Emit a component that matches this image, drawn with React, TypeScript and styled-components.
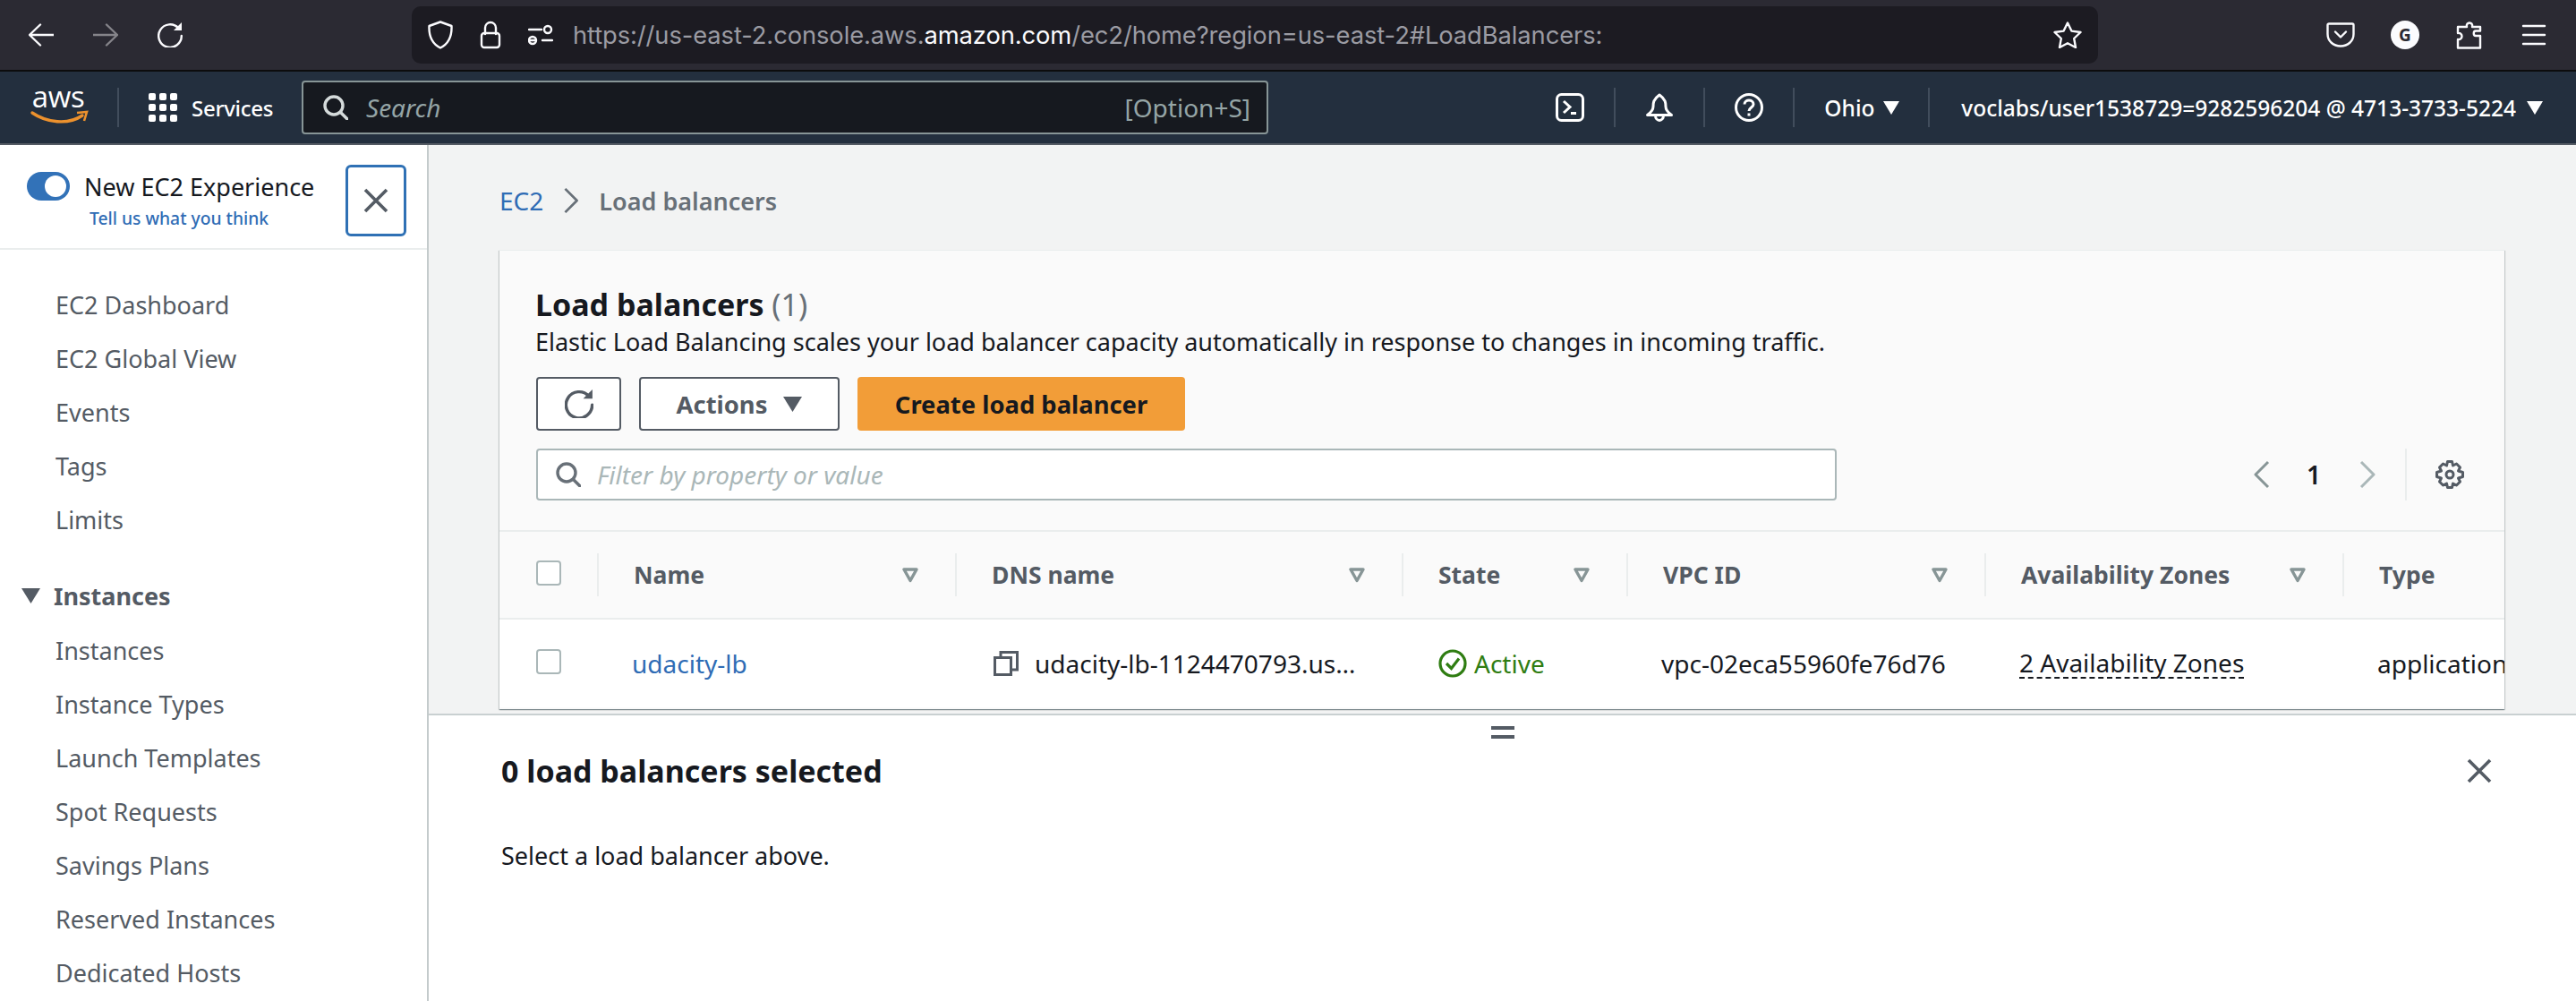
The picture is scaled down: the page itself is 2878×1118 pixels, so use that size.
import React from "react";
import styled, { createGlobalStyle } from "styled-components";

const GlobalStyle = createGlobalStyle`
  html, body {
    margin: 0;
    width: 2878px;
    height: 1118px;
    overflow: hidden;
    background: #fff;
  }
  body {
    font-family: "Noto Sans", "Open Sans", sans-serif;
    font-size: 27px;
    color: #16191f;
  }
`;

const Page = styled.div`
  width: 2878px;
  height: 1118px;
  display: flex;
  flex-direction: column;
`;

/* browser chrome */
const BrowserBar = styled.div`
  flex: none;
  height: 78px;
  box-sizing: content-box;
  background: #2b2a33;
  border-bottom: 2px solid #0c0c0d;
  display: flex;
  align-items: center;
  padding: 0 31px 0 32px;
`;

const NavArrows = styled.div`
  display: flex;
  gap: 44px;
  align-items: center;
`;

const UrlBar = styled.div`
  margin-left: 256px;
  width: 1884px;
  height: 64px;
  box-sizing: border-box;
  background: #1c1b22;
  border-radius: 10px;
  padding: 0 18px;
  display: flex;
  align-items: center;
  gap: 30px;
`;

const UrlText = styled.div`
  margin-left: -8px;
  font-family: "Inter", sans-serif;
  font-size: 27.35px;
  letter-spacing: -0.1px;
  color: #9b9ba3;
  white-space: nowrap;
  b {
    font-weight: 400;
    color: #fbfbfe;
  }
`;

const StarSlot = styled.div`
  margin-left: auto;
  display: flex;
`;

const ToolbarIcons = styled.div`
  margin-left: auto;
  display: flex;
  gap: 40px;
  align-items: center;
`;

const Avatar = styled.div`
  width: 32px;
  height: 32px;
  border-radius: 50%;
  background: #fbfbfe;
  color: #2b2a33;
  font-size: 19px;
  font-weight: 700;
  display: flex;
  align-items: center;
  justify-content: center;
`;

/* aws console nav */
const NavBar = styled.div`
  flex: none;
  height: 80px;
  background: #232f3e;
  border-bottom: 2px solid #545b64;
  display: flex;
  align-items: center;
  padding: 0 37px 0 34px;
  color: #fff;
`;

const NavRule = styled.div`
  width: 2px;
  height: 44px;
  background: #414d5c;
  margin: 0 33px;
`;

const ServicesLabel = styled.div`
  width: 89px;
  margin: 0 34px 0 16px;
  font-size: 24px;
  letter-spacing: -0.3px;
  font-weight: 500;
  white-space: nowrap;
`;

const SearchBox = styled.div`
  width: 1080px;
  height: 60px;
  box-sizing: border-box;
  background: #16191f;
  border: 2px solid #879596;
  border-radius: 4px;
  display: flex;
  align-items: center;
  padding: 0 18px 0 22px;
  color: #95a5a6;
  font-size: 28px;
`;

const SearchHint = styled.span`
  margin-left: 20px;
  font-style: italic;
`;

const ShortcutHint = styled.span`
  margin-left: auto;
`;

const NavRight = styled.div`
  margin-left: auto;
  display: flex;
  align-items: center;
  height: 44px;
`;

const NavCell = styled.div`
  width: 100px;
  height: 44px;
  box-sizing: border-box;
  border-right: 2px solid #414d5c;
  display: flex;
  align-items: center;
  justify-content: center;
`;

const RegionCell = styled.div`
  width: 151px;
  height: 44px;
  box-sizing: border-box;
  border-right: 2px solid #414d5c;
  display: flex;
  align-items: center;
  padding-left: 33px;
  gap: 10px;
  font-size: 24.5px;
  font-weight: 500;
`;

const AccountCell = styled.div`
  display: flex;
  align-items: center;
  padding-left: 35px;
  gap: 12px;
  font-size: 24.5px;
  font-weight: 500;
  white-space: nowrap;
`;

/* sidebar */
const Body = styled.div`
  flex: 1;
  min-height: 0;
  display: flex;
`;

const Sidebar = styled.div`
  flex: none;
  width: 479px;
  box-sizing: border-box;
  border-right: 2px solid #c4cbcc;
  background: #fff;
  overflow: hidden;
`;

const ExperienceRow = styled.div`
  height: 117px;
  box-sizing: border-box;
  border-bottom: 2px solid #eaeded;
  display: flex;
  padding: 22px 23px 0 30px;
  justify-content: space-between;
`;

const ExperienceText = styled.div`
  display: flex;
  flex-direction: column;
  padding-top: 6px;
`;

const ToggleLine = styled.div`
  display: flex;
  align-items: center;
  gap: 16px;
  height: 36px;
  white-space: nowrap;
`;

const Toggle = styled.div`
  width: 48px;
  height: 32px;
  border-radius: 16px;
  background: #3272b8;
  display: flex;
  align-items: center;
  justify-content: flex-end;
  padding-right: 4px;
  box-sizing: border-box;
  &::after {
    content: "";
    width: 24px;
    height: 24px;
    border-radius: 50%;
    background: #fff;
  }
`;

const FeedbackLink = styled.div`
  margin: 3px 0 0 70px;
  font-size: 19.3px;
  line-height: 30px;
  font-weight: 500;
  color: #2f6cb5;
  white-space: nowrap;
`;

const CloseBox = styled.div`
  width: 68px;
  height: 80px;
  box-sizing: border-box;
  border: 3px solid #2f71b5;
  border-radius: 6px;
  display: flex;
  align-items: center;
  justify-content: center;
`;

const SideList = styled.div`
  padding-top: 32px;
`;

const SideItem = styled.div`
  height: 60px;
  line-height: 60px;
  padding-left: 62px;
  color: #545b64;
  white-space: nowrap;
`;

const SideGroup = styled.div`
  height: 60px;
  margin: 24px 0 2px;
  padding-left: 24px;
  display: flex;
  align-items: center;
  gap: 15px;
  font-weight: 700;
  color: #545b64;
`;

/* main */
const Main = styled.div`
  flex: 1;
  min-width: 0;
  display: flex;
  flex-direction: column;
  background: #f2f3f3;
`;

const Content = styled.div`
  flex: none;
  padding: 42px 80px 5px 79px;
`;

const Crumbs = styled.div`
  height: 40px;
  margin-bottom: 35px;
  display: flex;
  align-items: center;
  gap: 22px;
`;

const CrumbLink = styled.span`
  color: #2f6cb5;
  font-size: 28px;
`;

const CrumbCurrent = styled.span`
  color: #687078;
  font-weight: 600;
`;

const Card = styled.div`
  height: 513px;
  box-sizing: border-box;
  background: #fafafa;
  box-shadow: 0 1px 1px 0 rgba(0, 28, 36, 0.3), 1px 1px 1px 0 rgba(0, 28, 36, 0.15),
    -1px 1px 1px 0 rgba(0, 28, 36, 0.15);
  border-top: 1px solid #eaeded;
  overflow: hidden;
`;

const CardHead = styled.div`
  height: 312px;
  box-sizing: border-box;
  padding: 40px 0 0 41px;
`;

const CardTitle = styled.div`
  margin-left: -1px;
  font-size: 34px;
  line-height: 40px;
  font-weight: 700;
  span {
    font-weight: 400;
    color: #687078;
  }
`;

const CardDesc = styled.div`
  margin: 2px 0 0 -1px;
  line-height: 40px;
`;

const ButtonRow = styled.div`
  display: flex;
  gap: 20px;
  margin-top: 19px;
  font-size: 27.4px;
`;

const OutlineButton = styled.div<{ $w: number }>`
  width: ${({ $w }) => $w}px;
  height: 60px;
  box-sizing: border-box;
  border: 2px solid #545b64;
  border-radius: 4px;
  background: #fff;
  color: #545b64;
  font-weight: 700;
  display: flex;
  align-items: center;
  justify-content: center;
  gap: 18px;
`;

const PrimaryButton = styled.div`
  width: 366px;
  height: 60px;
  border-radius: 4px;
  background: #f29d38;
  color: #16191f;
  font-weight: 700;
  display: flex;
  align-items: center;
  justify-content: center;
`;

const FilterRow = styled.div`
  display: flex;
  align-items: center;
  margin-top: 20px;
`;

const FilterInput = styled.div`
  width: 1453px;
  height: 58px;
  box-sizing: border-box;
  background: #fff;
  border: 2px solid #aab7b8;
  border-radius: 4px;
  display: flex;
  align-items: center;
  padding-left: 20px;
  gap: 18px;
  color: #aab7b8;
  font-size: 28px;
  font-style: italic;
`;

const Pager = styled.div`
  margin-left: auto;
  display: flex;
  align-items: center;
  height: 58px;
  color: #16191f;
  font-size: 28px;
  font-weight: 600;
`;

const PagerPage = styled.span`
  width: 42px;
  margin: 0 30px 0 28px;
  text-align: center;
`;

const PagerSettings = styled.div`
  height: 58px;
  margin-left: 33px;
  padding: 0 45px 0 32px;
  border-left: 2px solid #eaeded;
  display: flex;
  align-items: center;
`;

const TableRow = styled.div<{ $head?: boolean }>`
  display: grid;
  grid-template-columns: 109px 400px 499px 251px 400px 400px 181px;
  height: ${({ $head }) => ($head ? 98 : 100)}px;
  box-sizing: border-box;
  background: ${({ $head }) => ($head ? "#fafafa" : "#fff")};
  border-top: 2px solid #eaeded;
  align-items: center;
`;

const CheckCell = styled.div`
  padding: 0 0 4px 41px;
  display: flex;
`;

const CheckBox = styled.div`
  width: 28px;
  height: 28px;
  box-sizing: border-box;
  background: #fff;
  border: 2px solid #aab7b8;
  border-radius: 4px;
`;

const HeadCell = styled.div`
  height: 48px;
  box-sizing: border-box;
  padding: 0 41px 0 39px;
  border-left: 2px solid #eaeded;
  display: flex;
  align-items: center;
  justify-content: space-between;
  font-size: 26.5px;
  font-weight: 700;
  color: #545b64;
  white-space: nowrap;
`;

const RowCell = styled.div<{ $link?: boolean; $clip?: boolean }>`
  padding-left: 39px;
  display: flex;
  align-items: center;
  gap: 18px;
  font-size: 28px;
  white-space: nowrap;
  ${({ $clip }) => ($clip ? "overflow: hidden;" : "")}
  color: ${({ $link }) => ($link ? "#2f6cb5" : "#16191f")};
`;

const ActiveText = styled.span`
  color: #2f7d12;
  margin-left: -10px;
`;

const DottedText = styled.span`
  border-bottom: 2px dashed #16191f;
  line-height: 32px;
`;

/* split pane */
const Pane = styled.div`
  flex: 1;
  background: #fff;
  border-top: 2px solid #c9d0d1;
  display: flex;
  flex-direction: column;
`;

const Handle = styled.div`
  align-self: center;
  width: 26px;
  height: 14px;
  margin-top: 12px;
  box-sizing: border-box;
  border-top: 4px solid #545b64;
  border-bottom: 4px solid #545b64;
`;

const PaneHead = styled.div`
  display: flex;
  align-items: center;
  justify-content: space-between;
  padding: 0 94px 0 81px;
  margin-top: 16px;
  height: 40px;
`;

const PaneTitle = styled.div`
  font-size: 34px;
  font-weight: 700;
`;

const PaneText = styled.div`
  padding-left: 81px;
  margin-top: 55px;
  line-height: 40px;
`;

/* icons */
const Line = styled.svg<{ $c?: string }>`
  display: block;
  flex: none;
  fill: none;
  stroke: ${({ $c }) => $c ?? "#fbfbfe"};
  stroke-width: 2.4;
  stroke-linecap: round;
  stroke-linejoin: round;
`;

const Arrow = ({ flip, c }: { flip?: boolean; c?: string }) => (
  <Line $c={c} width="28" height="28" viewBox="0 0 28 28">
    <path d={flip ? "M0 14H26M15 2.5L27 14L15 25.5" : "M28 14H2M13 2.5L1 14L13 25.5"} />
  </Line>
);

const Refresh = ({ c, s = 28, w = 2.4 }: { c?: string; s?: number; w?: number }) => (
  <Line $c={c} width={s} height={s} viewBox="0 0 28 28" style={{ strokeWidth: w }}>
    <path d="M23.5 6.5A12.8 12.8 0 1 0 26.8 15" />
    <path d="M18 9H27V0Z" fill={c ?? "#fbfbfe"} strokeWidth="0" />
  </Line>
);

const SearchGlass = ({ c }: { c: string }) => (
  <Line $c={c} width="28" height="28" viewBox="0 0 28 28" style={{ strokeWidth: 3.4 }}>
    <circle cx="12" cy="12" r="10" />
    <path d="M19.5 19.5L27 27" />
  </Line>
);

const SmallCaret = ({ c = "#fff", w = 18, h = 15 }: { c?: string; w?: number; h?: number }) => (
  <svg width={w} height={h} viewBox="0 0 18 15" preserveAspectRatio="none" style={{ flex: "none" }}>
    <path d="M0 0H18L9 15Z" fill={c} />
  </svg>
);

const FilterCaret = () => (
  <Line $c="#879596" width="18" height="17" viewBox="0 0 18 17" style={{ strokeWidth: 3.4, strokeLinecap: "butt" }}>
    <path d="M2 2H16L9 14.5Z" />
  </Line>
);

const Cross = ({ c = "#545b64" }: { c?: string }) => (
  <Line $c={c} width="28" height="28" viewBox="0 0 28 28" style={{ strokeWidth: 3.6, strokeLinecap: "butt" }}>
    <path d="M2 2L26 26M26 2L2 26" />
  </Line>
);

const Chevron = ({ flip, c, h = 32 }: { flip?: boolean; c: string; h?: number }) => (
  <Line $c={c} width="18" height={h} viewBox="0 0 18 32" style={{ strokeWidth: 3, strokeLinecap: "butt" }}>
    <path d={flip ? "M2 2L16 16L2 30" : "M16 2L2 16L16 30"} />
  </Line>
);

const LogoSvg = styled.svg`
  flex: none;
  overflow: visible;
`;

const AwsLogo = () => (
  <LogoSvg width="64" height="40" viewBox="0 0 64 40">
    <text x="31" y="20" textAnchor="middle" fontFamily="Open Sans, sans-serif" fontSize="33" fontWeight="500" fill="#fff" letterSpacing="-0.4">
      aws
    </text>
    <path d="M2 26C18 37 42 40 58 29" fill="none" stroke="#ec912d" strokeWidth="3.4" strokeLinecap="round" />
    <path d="M52 26L63 25L60 35" fill="none" stroke="#ec912d" strokeWidth="2.6" />
  </LogoSvg>
);

const GridDots = () => (
  <svg width="32" height="32" viewBox="0 0 32 32" style={{ flex: "none" }}>
    {[0, 12, 24].flatMap((y) =>
      [0, 12, 24].map((x) => <rect key={`${x}-${y}`} x={x} y={y} width="8" height="8" rx="2" fill="#fff" />)
    )}
  </svg>
);

const TOP_LINKS = ["EC2 Dashboard", "EC2 Global View", "Events", "Tags", "Limits"];
const INSTANCE_LINKS = ["Instances", "Instance Types", "Launch Templates", "Spot Requests", "Savings Plans", "Reserved Instances", "Dedicated Hosts"];
const HEADERS = ["Name", "DNS name", "State", "VPC ID", "Availability Zones"];

export default function App() {
  return (
    <Page>
      <GlobalStyle />
      <BrowserBar>
        <NavArrows>
          <Arrow />
          <Arrow flip c="#85848a" />
          <Refresh />
        </NavArrows>
        <UrlBar>
          <Line width="28" height="32" viewBox="0 0 28 32">
            <path d="M14 1.5L26.5 6C27 17 23 26 14 30.5C5 26 1 17 1.5 6Z" />
          </Line>
          <Line width="24" height="32" viewBox="0 0 24 32">
            <path d="M6 15V8a6 6 0 0 1 12 0V15" />
            <rect x="2" y="14" width="20" height="16" rx="3" />
          </Line>
          <Line width="28" height="24" viewBox="0 0 28 24">
            <path d="M1 6H15M1 18H8M16 18H27" />
            <circle cx="22" cy="6" r="4" />
            <circle cx="5" cy="18" r="4" />
          </Line>
          <UrlText>
            https://us-east-2.console.aws.<b>amazon.com</b>/ec2/home?region=us-east-2#LoadBalancers:
          </UrlText>
          <StarSlot>
            <Line width="32" height="30" viewBox="0 0 32 30">
              <path d="M16 1.5L20.4 10.6L30.5 12L23.2 19L25 29L16 24.2L7 29L8.8 19L1.5 12L11.6 10.6Z" />
            </Line>
          </StarSlot>
        </UrlBar>
        <ToolbarIcons>
          <Line width="32" height="28" viewBox="0 0 32 28">
            <path d="M3 1.5H29A1.5 1.5 0 0 1 30.5 3V13C30.5 21 24 26.5 16 26.5C8 26.5 1.5 21 1.5 13V3A1.5 1.5 0 0 1 3 1.5Z" />
            <path d="M10 10.5L16 16.5L22 10.5" />
          </Line>
          <Avatar>G</Avatar>
          <Line width="32" height="32" viewBox="0 0 32 32">
            <path d="M3 30.5H28V17H23C20 17 20 11.5 23 11.5H28V7H19C20.5 1 11.5 1 13 7H3V14C9 13 9 22 3 21Z" />
          </Line>
          <Line width="32" height="24" viewBox="0 0 32 24">
            <path d="M4 2H28M4 12H28M4 22H28" />
          </Line>
        </ToolbarIcons>
      </BrowserBar>

      <NavBar>
        <AwsLogo />
        <NavRule />
        <GridDots />
        <ServicesLabel>Services</ServicesLabel>
        <SearchBox>
          <SearchGlass c="#d5dbdb" />
          <SearchHint>Search</SearchHint>
          <ShortcutHint>[Option+S]</ShortcutHint>
        </SearchBox>
        <NavRight>
          <NavCell>
            <svg width="32" height="32" viewBox="0 0 32 32">
              <rect x="1.5" y="1.5" width="29" height="29" rx="5" fill="none" stroke="#fff" strokeWidth="3" />
              <path d="M9 9L16 15.5L9 22" fill="none" stroke="#fff" strokeWidth="3" />
              <path d="M17 22.5H23" stroke="#fff" strokeWidth="3" />
            </svg>
          </NavCell>
          <NavCell>
            <Line $c="#fff" width="32" height="32" viewBox="0 0 32 32" style={{ strokeWidth: 3 }}>
              <path d="M16 2C9 7 9 11 9 15C9 19 6 22 2.5 24.5H29.5C26 22 23 19 23 15C23 11 23 7 16 2Z" />
              <path d="M11.5 25A4.5 5.5 0 0 0 20.5 25" />
            </Line>
          </NavCell>
          <NavCell>
            <svg width="32" height="32" viewBox="0 0 32 32">
              <circle cx="16" cy="16" r="14.5" fill="none" stroke="#fff" strokeWidth="3" />
              <path d="M11 12.5C11 6.5 21 6.5 21 12.5C21 16 16 16 16 20" fill="none" stroke="#fff" strokeWidth="3" />
              <rect x="14.5" y="22.5" width="3" height="3" fill="#fff" />
            </svg>
          </NavCell>
          <RegionCell>
            Ohio <SmallCaret />
          </RegionCell>
          <AccountCell>
            voclabs/user1538729=9282596204 @ 4713-3733-5224 <SmallCaret />
          </AccountCell>
        </NavRight>
      </NavBar>

      <Body>
        <Sidebar>
          <ExperienceRow>
            <ExperienceText>
              <ToggleLine>
                <Toggle />
                New EC2 Experience
              </ToggleLine>
              <FeedbackLink>Tell us what you think</FeedbackLink>
            </ExperienceText>
            <CloseBox>
              <Cross />
            </CloseBox>
          </ExperienceRow>
          <SideList>
            {TOP_LINKS.map((n) => (
              <SideItem key={n}>{n}</SideItem>
            ))}
            <SideGroup>
              <SmallCaret c="#545b64" w={21} h={17} />
              Instances
            </SideGroup>
            {INSTANCE_LINKS.map((n) => (
              <SideItem key={n}>{n}</SideItem>
            ))}
          </SideList>
        </Sidebar>

        <Main>
          <Content>
            <Crumbs>
              <CrumbLink>EC2</CrumbLink>
              <Chevron flip c="#687078" h={30} />
              <CrumbCurrent>Load balancers</CrumbCurrent>
            </Crumbs>
            <Card>
              <CardHead>
                <CardTitle>
                  Load balancers <span>(1)</span>
                </CardTitle>
                <CardDesc>Elastic Load Balancing scales your load balancer capacity automatically in response to changes in incoming traffic.</CardDesc>
                <ButtonRow>
                  <OutlineButton $w={95}>
                    <Refresh c="#545b64" s={32} w={3} />
                  </OutlineButton>
                  <OutlineButton $w={224}>
                    Actions <SmallCaret c="#545b64" w={21} h={17} />
                  </OutlineButton>
                  <PrimaryButton>Create load balancer</PrimaryButton>
                </ButtonRow>
                <FilterRow>
                  <FilterInput>
                    <SearchGlass c="#687078" />
                    Filter by property or value
                  </FilterInput>
                  <Pager>
                    <Chevron c="#879596" />
                    <PagerPage>1</PagerPage>
                    <Chevron flip c="#aab7b8" />
                    <PagerSettings>
                      <svg width="32" height="32" viewBox="0 0 32 32">
                        <path
                          d="M13.5 1.5H18.5L19.5 6L23.5 4L27.5 8L25.5 12L30.5 13.5V18.5L25.5 20L27.5 24L23.5 28L19.5 26L18.5 30.5H13.5L12.5 26L8.5 28L4.5 24L6.5 20L1.5 18.5V13.5L6.5 12L4.5 8L8.5 4L12.5 6Z"
                          fill="none"
                          stroke="#545b64"
                          strokeWidth="3"
                          strokeLinejoin="round"
                        />
                        <circle cx="16" cy="16" r="4" fill="none" stroke="#545b64" strokeWidth="3" />
                      </svg>
                    </PagerSettings>
                  </Pager>
                </FilterRow>
              </CardHead>
              <TableRow $head>
                <CheckCell>
                  <CheckBox />
                </CheckCell>
                {HEADERS.map((h) => (
                  <HeadCell key={h}>
                    {h}
                    <FilterCaret />
                  </HeadCell>
                ))}
                <HeadCell>Type</HeadCell>
              </TableRow>
              <TableRow>
                <CheckCell>
                  <CheckBox />
                </CheckCell>
                <RowCell $link>udacity-lb</RowCell>
                <RowCell>
                  <svg width="28" height="28" viewBox="0 0 28 28" style={{ flex: "none", marginLeft: 4 }}>
                    <path d="M8 7V1.5H26.5V21H20" fill="none" stroke="#545b64" strokeWidth="3" />
                    <rect x="1.5" y="7.5" width="18" height="19" fill="none" stroke="#545b64" strokeWidth="3" />
                  </svg>
                  udacity-lb-1124470793.us…
                </RowCell>
                <RowCell>
                  <svg width="32" height="32" viewBox="0 0 32 32" style={{ flex: "none", marginLeft: 2 }}>
                    <circle cx="16" cy="16" r="14" fill="none" stroke="#2f7d12" strokeWidth="3.2" />
                    <path d="M9 16L14.5 21.5L23 10.5" fill="none" stroke="#2f7d12" strokeWidth="3.2" />
                  </svg>
                  <ActiveText>Active</ActiveText>
                </RowCell>
                <RowCell>vpc-02eca55960fe76d76</RowCell>
                <RowCell>
                  <DottedText>2 Availability Zones</DottedText>
                </RowCell>
                <RowCell $clip>application</RowCell>
              </TableRow>
            </Card>
          </Content>
          <Pane>
            <Handle />
            <PaneHead>
              <PaneTitle>0 load balancers selected</PaneTitle>
              <Cross />
            </PaneHead>
            <PaneText>Select a load balancer above.</PaneText>
          </Pane>
        </Main>
      </Body>
    </Page>
  );
}
